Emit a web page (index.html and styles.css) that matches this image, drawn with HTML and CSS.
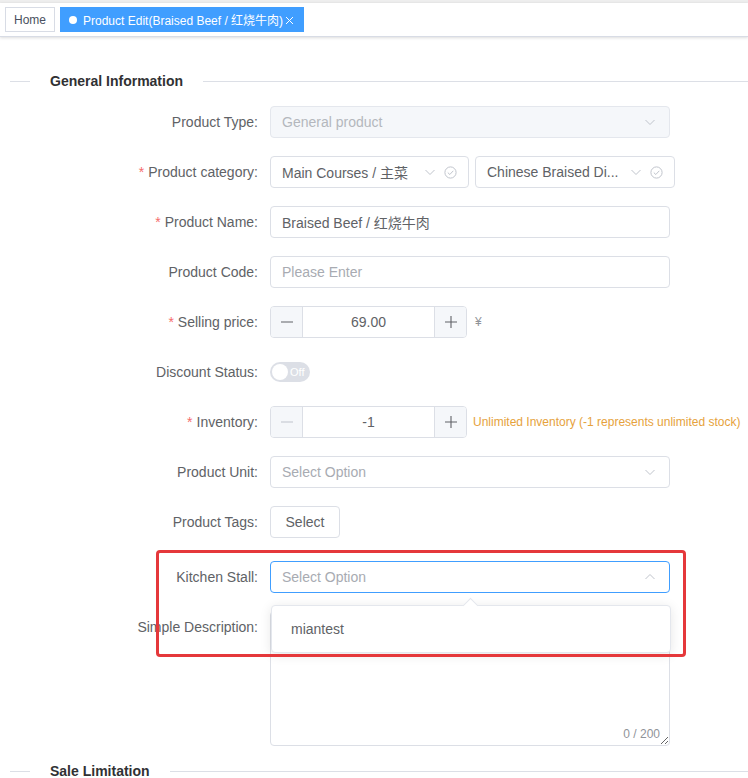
FILE: index.html
```html
<!DOCTYPE html>
<html lang="en">
<head>
<meta charset="utf-8">
<title>Product Edit</title>
<link rel="stylesheet" href="styles.css">
</head>
<body>
<div class="topstrip"></div>
<div class="tags-view">
  <span class="tag">Home</span>
  <span class="tag active"><span class="dot"></span>Product Edit(Braised Beef / 红烧牛肉)<svg class="close" width="9" height="9" viewBox="0 0 9 9"><line x1="1" y1="1" x2="8" y2="8" stroke="#fff" stroke-width="1"/><line x1="8" y1="1" x2="1" y2="8" stroke="#fff" stroke-width="1"/></svg></span>
</div>
<main class="main">
  <div class="divider"><span class="divider-text">General Information</span></div>
  <div class="form">
    <div class="row">
      <div class="label">Product Type:</div>
      <div class="control">
        <div class="input select disabled"><span class="val">General product</span>
          <svg class="ico" width="12" height="12" viewBox="0 0 12 12"><polyline points="1.5,4 6,8.5 10.5,4" fill="none" stroke="#c0c4cc" stroke-width="1"/></svg>
        </div>
      </div>
    </div>
    <div class="row">
      <div class="label"><span class="req">*</span>Product category:</div>
      <div class="control gap">
        <div class="input cascader"><span class="val">Main Courses / 主菜</span>
          <svg class="ico" width="12" height="12" viewBox="0 0 12 12"><polyline points="1.5,4 6,8.5 10.5,4" fill="none" stroke="#c0c4cc" stroke-width="1"/></svg>
          <svg class="ico chk" width="13" height="13" viewBox="0 0 13 13"><circle cx="6.5" cy="6.5" r="5.6" fill="none" stroke="#c0c4cc" stroke-width="1"/><polyline points="3.8,6.6 5.8,8.5 9.3,4.8" fill="none" stroke="#c0c4cc" stroke-width="1"/></svg>
        </div>
        <div class="input cascader wide"><span class="val">Chinese Braised Di...</span>
          <svg class="ico" width="12" height="12" viewBox="0 0 12 12"><polyline points="1.5,4 6,8.5 10.5,4" fill="none" stroke="#c0c4cc" stroke-width="1"/></svg>
          <svg class="ico chk" width="13" height="13" viewBox="0 0 13 13"><circle cx="6.5" cy="6.5" r="5.6" fill="none" stroke="#c0c4cc" stroke-width="1"/><polyline points="3.8,6.6 5.8,8.5 9.3,4.8" fill="none" stroke="#c0c4cc" stroke-width="1"/></svg>
        </div>
      </div>
    </div>
    <div class="row">
      <div class="label"><span class="req">*</span>Product Name:</div>
      <div class="control"><div class="input"><span class="val">Braised Beef / 红烧牛肉</span></div></div>
    </div>
    <div class="row">
      <div class="label">Product Code:</div>
      <div class="control"><div class="input"><span class="val placeholder">Please Enter</span></div></div>
    </div>
    <div class="row">
      <div class="label"><span class="req">*</span>Selling price:</div>
      <div class="control">
        <div class="num">
          <span class="nbtn minus"><svg width="14" height="14" viewBox="0 0 14 14"><line x1="1" y1="7" x2="13" y2="7" stroke="#606266" stroke-width="1.1"/></svg></span>
          <span class="nval">69.00</span>
          <span class="nbtn plus"><svg width="14" height="14" viewBox="0 0 14 14"><line x1="1" y1="7" x2="13" y2="7" stroke="#606266" stroke-width="1.1"/><line x1="7" y1="1" x2="7" y2="13" stroke="#606266" stroke-width="1.1"/></svg></span>
        </div>
        <span class="suffix">¥</span>
      </div>
    </div>
    <div class="row">
      <div class="label">Discount Status:</div>
      <div class="control">
        <div class="switch"><span class="knob"></span><span class="switch-text">Off</span></div>
      </div>
    </div>
    <div class="row">
      <div class="label"><span class="req">*</span>Inventory:</div>
      <div class="control">
        <div class="num">
          <span class="nbtn minus"><svg width="14" height="14" viewBox="0 0 14 14"><line x1="1" y1="7" x2="13" y2="7" stroke="#c0c4cc" stroke-width="1.1"/></svg></span>
          <span class="nval">-1</span>
          <span class="nbtn plus"><svg width="14" height="14" viewBox="0 0 14 14"><line x1="1" y1="7" x2="13" y2="7" stroke="#606266" stroke-width="1.1"/><line x1="7" y1="1" x2="7" y2="13" stroke="#606266" stroke-width="1.1"/></svg></span>
        </div>
        <span class="warn">Unlimited Inventory (-1 represents unlimited stock)</span>
      </div>
    </div>
    <div class="row">
      <div class="label">Product Unit:</div>
      <div class="control">
        <div class="input select"><span class="val placeholder">Select Option</span>
          <svg class="ico" width="12" height="12" viewBox="0 0 12 12"><polyline points="1.5,4 6,8.5 10.5,4" fill="none" stroke="#c0c4cc" stroke-width="1"/></svg>
        </div>
      </div>
    </div>
    <div class="row row-tags">
      <div class="label">Product Tags:</div>
      <div class="control"><button class="btn-plain" type="button">Select</button></div>
    </div>
    <div class="row">
      <div class="label">Kitchen Stall:</div>
      <div class="control pop-anchor">
        <div class="input select focus"><span class="val placeholder">Select Option</span>
          <svg class="ico" width="12" height="12" viewBox="0 0 12 12"><polyline points="1.5,8 6,3.5 10.5,8" fill="none" stroke="#c0c4cc" stroke-width="1"/></svg>
        </div>
        <div class="popper">
          <div class="option">miantest</div>
        </div>
      </div>
    </div>
    <div class="row row-last">
      <div class="label">Simple Description:</div>
      <div class="control">
        <div class="ta-wrap">
          <textarea class="ta"></textarea>
          <span class="count">0 / 200</span>
        </div>
      </div>
    </div>
  </div>
  <div class="divider divider-low"><span class="divider-text">Sale Limitation</span></div>
</main>
<div class="annot"></div>
</body>
</html>
```
FILE: styles.css
```css
* { box-sizing: border-box; }
html, body { margin: 0; background: #fff; }
body {
  font-family: "Liberation Sans", Arial, "Noto Sans CJK SC", sans-serif;
  font-size: 14px;
  color: #606266;
  position: relative;
  height: 778px;
  overflow: hidden;
}
.topstrip { height: 3px; background: #eeeeee; }
.tags-view {
  height: 34px;
  border-bottom: 1px solid #d8dce5;
  box-shadow: 0 1px 3px 0 rgba(0,0,0,.12), 0 0 3px 0 rgba(0,0,0,.04);
  padding: 4px 0 0 5px;
  display: flex;
  align-items: flex-start;
  gap: 5px;
  background: #fff;
}
.tag {
  height: 25px;
  border: 1px solid #d8dce5;
  padding: 0 8px;
  font-size: 12px;
  color: #495060;
  background: #fff;
  display: inline-flex;
  align-items: center;
  white-space: nowrap;
}
.tag.active {
  background: #409eff;
  border-color: #409eff;
  color: #fff;
  padding: 0 9px 0 8px;
}
.dot { width: 8px; height: 8px; border-radius: 50%; background: #fff; margin-right: 6px; }
.close { margin-left: 2px; display: block; margin-top: 2px; }

.main { padding-top: 34px; }
.divider {
  display: flex;
  align-items: center;
  height: 20px;
  margin-left: 10px;
}
.divider-low { margin-top: 1px; }
.divider::before { content: ""; width: 20px; height: 1px; background: #dcdfe6; }
.divider::after { content: ""; flex: 1; height: 1px; background: #dcdfe6; }
.divider-text {
  padding: 0 20px;
  font-size: 14px;
  font-weight: 700;
  color: #303133;
  line-height: 20px;
}
.form { margin-top: 15px; }
.row { display: flex; align-items: flex-start; margin-bottom: 18px; }
.row-tags { margin-bottom: 23px; }
.row-last { margin-bottom: 15px; }
.label {
  width: 270px;
  flex: none;
  padding-right: 12px;
  text-align: right;
  line-height: 32px;
  font-size: 14px;
  color: #606266;
  white-space: nowrap;
}
.req { color: #f56c6c; margin-right: 4px; }
.control { display: flex; align-items: center; min-height: 32px; }
.control.gap { gap: 6px; }
.input {
  width: 400px;
  height: 32px;
  border: 1px solid #dcdfe6;
  border-radius: 4px;
  display: flex;
  align-items: center;
  padding: 0 13px 0 11px;
  background: #fff;
  color: #606266;
  white-space: nowrap;
}
.val { flex: 1; overflow: hidden; }
.placeholder { color: #a8abb2; }
.disabled { background: #f5f7fa; border-color: #e4e7ed; color: #b4b7bd; }
.focus { border-color: #409eff; }
.ico { flex: none; display: block; }
.cascader { width: 199px; padding-right: 11px; }
.cascader.wide { width: 200px; }
.chk { margin-left: 8px; }

.num {
  width: 197px;
  height: 32px;
  border: 1px solid #dcdfe6;
  border-radius: 4px;
  display: flex;
  overflow: hidden;
  background: #fff;
}
.nbtn {
  width: 32px;
  flex: none;
  background: #f5f7fa;
  display: flex;
  align-items: center;
  justify-content: center;
}
.minus { border-right: 1px solid #dcdfe6; width: 32px; }
.plus { border-left: 1px solid #dcdfe6; }
.nval { flex: 1; text-align: center; line-height: 30px; color: #606266; }
.suffix { margin-left: 8px; font-size: 12px; color: #909399; }

.switch {
  width: 40px;
  height: 20px;
  border-radius: 10px;
  background: #dcdfe6;
  display: flex;
  align-items: center;
  padding: 0 2px;
  gap: 2px;
}
.knob { width: 16px; height: 16px; border-radius: 50%; background: #fff; flex: none; }
.switch-text { font-size: 11px; color: #fff; }

.warn { margin-left: 6px; font-size: 12px; color: #e6a23c; white-space: nowrap; }

.btn-plain {
  width: 70px;
  height: 32px;
  border: 1px solid #dcdfe6;
  border-radius: 4px;
  background: #fff;
  color: #606266;
  font-family: inherit;
  font-size: 14px;
  padding: 0;
}

.pop-anchor { position: relative; }
.popper {
  position: absolute;
  top: 44px;
  left: 1px;
  width: 400px;
  background: #fff;
  border: 1px solid #e4e7ed;
  border-radius: 4px;
  box-shadow: 0 2px 12px 0 rgba(0,0,0,.1);
  padding: 6px 0;
  z-index: 5;
}
.popper::before {
  content: "";
  position: absolute;
  top: -6px;
  left: 193px;
  width: 10px;
  height: 10px;
  background: #fff;
  border-top: 1px solid #e4e7ed;
  border-left: 1px solid #e4e7ed;
  transform: rotate(45deg);
}
.option {
  height: 34px;
  line-height: 34px;
  padding: 0 19px;
  font-size: 14px;
  color: #606266;
}

.ta-wrap { position: relative; width: 400px; }
.ta {
  display: block;
  width: 400px;
  height: 135px;
  border: 1px solid #dcdfe6;
  border-radius: 4px;
  resize: vertical;
  font-family: inherit;
  font-size: 14px;
  padding: 5px 11px;
  margin: 0;
}
.count {
  position: absolute;
  right: 10px;
  bottom: 4px;
  font-size: 12px;
  color: #909399;
  background: #fff;
  line-height: 16px;
}

.annot {
  position: absolute;
  left: 156px;
  top: 550px;
  width: 530px;
  height: 107px;
  border: 3px solid #e5383b;
  border-radius: 4px;
  z-index: 10;
  pointer-events: none;
}
```
